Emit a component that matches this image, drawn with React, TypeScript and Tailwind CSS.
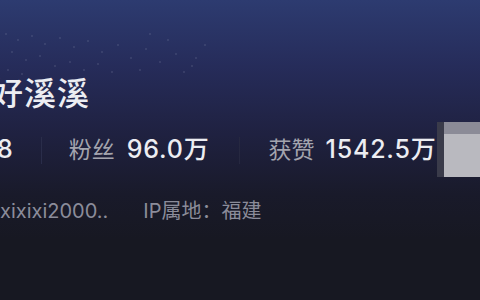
const stars = [
  [6, 34], [18, 40], [32, 36], [45, 44], [60, 38], [74, 47], [88, 41], [102, 52],
  [118, 45], [131, 58], [146, 49], [160, 62], [176, 54], [192, 66], [205, 45],
  [12, 52], [26, 60], [40, 56], [55, 66], [70, 62], [84, 70], [98, 64], [112, 72],
  [8, 70], [22, 74], [140, 70], [168, 40], [184, 72], [196, 58], [150, 34],
];

const App = () => {
  return (
    <div
      className="relative w-[480px] h-[300px] overflow-hidden bg-[linear-gradient(to_bottom,#2d3b70_0%,#262c5a_22%,#1f2140_45%,#191a2a_65%,#171822_80%,#171822_100%)]"
      style={{ fontFamily: 'Inter, "Noto Sans CJK SC", sans-serif' }}
    >
      <svg className="absolute left-0 top-0" width="220" height="80">
        {stars.map(([x, y], i) => (
          <circle key={i} cx={x} cy={y} r="0.7" fill="#8a8fb0" opacity="0.5" />
        ))}
      </svg>

      <div className="relative pt-[76px]">
        <h1 className="-ml-[9px] text-[32px] leading-[36px] font-medium text-[#ecedf2] tracking-[1px]">
          好溪溪
        </h1>

        <div className="mt-[10px] flex items-center h-[56px]">
          <span className="-ml-[3px] text-[25px] font-medium text-[#ecedf2]">8</span>
          <div className="ml-[28px] mr-[27px] w-px h-[27px] bg-[#2a2d4a]" />
          <span className="text-[23px] text-[#a3a4ae]">粉丝</span>
          <span className="ml-[12px] text-[25px] font-medium text-[#ecedf2] tracking-[0.8px]">96.0万</span>
          <div className="mx-[29px] w-px h-[27px] bg-[#262840]" />
          <span className="text-[23px] text-[#a3a4ae]">获赞</span>
          <span className="ml-[11px] text-[25px] font-medium text-[#ecedf2] tracking-[0.8px]">1542.5万</span>
          <div className="ml-auto flex w-[43px] h-[55px] self-start">
            <div className="w-[7px] h-full bg-[#3a3b4a]" />
            <div className="flex-1 flex flex-col">
              <div className="h-[12px] bg-[#8b8b97]" />
              <div className="flex-1 bg-[#b9b9bf]" />
            </div>
          </div>
        </div>

        <div className="mt-[18px] flex items-center gap-[35px] text-[20px] text-[#8b8c9a]">
          <span>xixixi2000..</span>
          <span>IP属地：福建</span>
        </div>
      </div>
    </div>
  );
};

export default App;
